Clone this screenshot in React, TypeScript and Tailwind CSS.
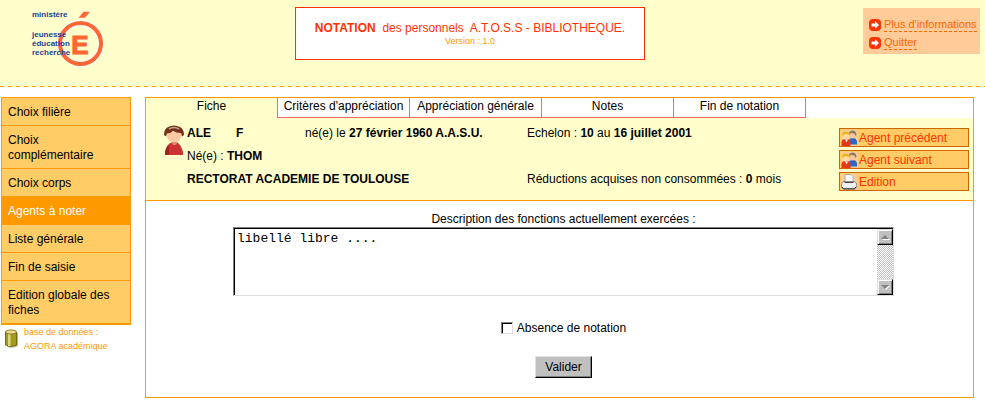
import React, { useState } from 'react';

interface MenuItem {
  label: string;
  active?: boolean;
}

const MENU: MenuItem[] = [
  { label: 'Choix filière' },
  { label: 'Choix complémentaire' },
  { label: 'Choix corps' },
  { label: 'Agents à noter', active: true },
  { label: 'Liste générale' },
  { label: 'Fin de saisie' },
  { label: 'Edition globale des fiches' },
];

const TABS = ['Fiche', "Critères d'appréciation", 'Appréciation générale', 'Notes', 'Fin de notation'];

const Logo: React.FC = () => (
  <div className="relative ml-8 mt-2 h-[60px] w-[74px]">
    <svg className="absolute inset-0" width="74" height="60" viewBox="0 0 74 60" aria-hidden="true">
      <circle cx="48.500" cy="35.500" r="20.500" fill="none" stroke="#fff" strokeWidth="6" />
      <circle cx="48.500" cy="35.500" r="20.500" fill="none" stroke="#ff6633" strokeWidth="4" />
      <path d="M46 10 L51.500 3.500 H58.500 L53 10 Z" fill="#ff6633" stroke="#fff" strokeWidth="0.500" />
      <text
        x="48"
        y="46"
        textAnchor="middle"
        fontFamily="Liberation Sans, sans-serif"
        fontWeight="bold"
        fontSize="26"
        fill="#ff6633"
        stroke="#ff6633"
        strokeWidth="1"
      >
        E
      </text>
    </svg>
    <div className="absolute left-0 top-0 text-[8px] font-bold leading-[9px] text-[#1c3f94]">
      <p className="pt-[2px]">ministère</p>
      <p className="mt-[11px]">jeunesse</p>
      <p>éducation</p>
      <p>recherche</p>
    </div>
  </div>
);

const ArrowIcon: React.FC = () => (
  <svg className="shrink-0" width="12" height="12" viewBox="0 0 12 12" aria-hidden="true">
    <rect width="12" height="12" rx="4" fill="#ff3300" />
    <path d="M2.500 4.500 H6 V2 L10 6 L6 10 V7.500 H2.500 Z" fill="#fff" />
  </svg>
);

const DatabaseIcon: React.FC = () => (
  <svg className="shrink-0" width="15" height="19" viewBox="0 0 15 19" aria-hidden="true">
    <path d="M3 4 H14 V17 Q9 20 3 18 Z" fill="#b4b4a8" />
    <path d="M1.500 3 V16 Q6.500 19 12.500 16 V3 Z" fill="#a39a24" stroke="#776b10" />
    <path d="M4 5 V17 H6.500 V5 Z" fill="#ddd67a" />
    <ellipse cx="7" cy="3" rx="5.500" ry="2" fill="#e8df90" stroke="#8a7d18" />
  </svg>
);

const PersonIcon: React.FC = () => (
  <svg className="shrink-0" width="20" height="30" viewBox="0 0 20 30" aria-hidden="true">
    <path d="M1 30 V27 Q3 18 8 17.500 H13 Q17 19 19 27 V30 Z" fill="#cc3333" />
    <path d="M1 30 V27 Q2 22 5 20 V30 Z" fill="#a51f22" />
    <path d="M7 17 H14 L11.500 20 H9 Z" fill="#d98a70" />
    <path d="M3 7 H17 V12 Q16 17 10 17 Q4 17 3 12 Z" fill="#ffc8a4" />
    <path d="M0 10 Q0 4 4 2 Q10 -1 16 2 Q20 4 20 10 L18 11.500 L17 8 Q12 8 9 6 Q7 8 3 8.500 L2 11.500 Z" fill="#7a3018" />
    <path d="M5 4 Q10 1 15 4" fill="none" stroke="#b8a898" strokeWidth="1.500" />
  </svg>
);

const PeopleIcon: React.FC = () => (
  <svg className="shrink-0" width="16" height="16" viewBox="0 0 16 16" aria-hidden="true">
    <rect width="16" height="16" fill="#ffcc99" />
    <path d="M8 14.500 V10 Q9 7.500 12 7.500 Q15 8 16 11 V14.500 Z" fill="#2c66c4" />
    <circle cx="11.500" cy="5" r="3.500" fill="#f5c49b" />
    <path d="M7.500 4 Q8 0.500 12 0.500 Q15.500 1 15.500 5 L14.500 6 Q14 3 11 3 Z" fill="#8a7a6a" />
    <path d="M0.500 16 V12 Q1 9 4 9 H6 Q9 9 9.500 12 V16 Z" fill="#e03818" />
    <circle cx="5" cy="6" r="3.500" fill="#ffd9a8" />
    <path d="M1 6 Q0.500 1.500 5 1.500 Q9 1.500 9 6 Q7 4 4.500 4 Q2 5 1 6 Z" fill="#eeb41c" />
    <path d="M4 9.500 L5.500 12.500 L7 9.500 Z" fill="#fff" />
  </svg>
);

const PrinterIcon: React.FC = () => (
  <svg className="shrink-0" width="16" height="16" viewBox="0 0 16 16" aria-hidden="true">
    <rect width="16" height="16" fill="#ffcc99" />
    <path d="M4 8 V0.500 H10 L12 2.500 V8 Z" fill="#fff" stroke="#8890a0" strokeWidth="0.700" />
    <path d="M2 7.500 H14 L15.600 10 V13 L14 15 H2 L0.400 13 V10 Z" fill="#f0f0f0" stroke="#777" strokeWidth="0.800" />
    <path d="M3.500 8.500 H12.500" stroke="#444" />
    <path d="M1 13 L2.500 14.800 H13.500 L15 13" fill="none" stroke="#333" />
  </svg>
);

const ACTIONS = [
  { label: 'Agent précédent', icon: <PeopleIcon /> },
  { label: 'Agent suivant', icon: <PeopleIcon /> },
  { label: 'Edition', icon: <PrinterIcon /> },
];

const Header: React.FC = () => (
  <header>
    <div className="grid h-[86px] grid-cols-[295px_350px_1fr] items-start bg-[#ffffcc]">
      <Logo />
      <div className="mt-[7px] h-[53px] border border-[#ff3300] bg-white pt-3 text-center text-[#ff3300]">
        <h1 className="whitespace-pre text-[12px] leading-4">
          <b>NOTATION</b>{'  des personnels  A.T.O.S.S - BIBLIOTHEQUE.'}
        </h1>
        <p className="text-[9px] leading-[10px] text-[#ff9900]">Version : 1.0</p>
      </div>
      <nav className="mr-[5px] mt-2 flex h-[46px] w-[117px] flex-col gap-1 justify-self-end bg-[#ffcc99] pl-[6px] pt-[10px] text-[11px] leading-[13px] text-[#ff6600]">
        {["Plus d'informations", 'Quitter'].map((label) => (
          <div key={label} className="flex items-center gap-[3px]">
            <ArrowIcon />
            <a href="#" className="whitespace-nowrap border-b border-dashed border-[#ff6600]">{label}</a>
          </div>
        ))}
      </nav>
    </div>
    <div className="h-px bg-[repeating-linear-gradient(90deg,#ff9900_0_4px,#ffffcc_4px_8px)]" />
  </header>
);

const Sidebar: React.FC = () => (
  <aside className="w-[130px] shrink-0">
    <nav className="border-x border-b-2 border-[#ff9900] bg-[#ffcc66]">
      {MENU.map((item) => (
        <a
          key={item.label}
          href="#"
          className={`block border-t border-[#ff9900] px-[6px] pb-[5px] pt-[7px] text-[12px] leading-[15px] ${
            item.active ? 'bg-[#ff9900] text-white' : 'text-black'
          }`}
        >
          {item.label}
        </a>
      ))}
    </nav>
    <div className="flex items-start gap-[5px] pl-[3px] text-[9px] leading-[14px] text-[#ff9900]">
      <div className="pt-1">
        <DatabaseIcon />
      </div>
      <p>
        base de données :<br />AGORA académique
      </p>
    </div>
  </aside>
);

const Tabs: React.FC = () => (
  <div className="flex h-5 text-[12px] leading-4" role="tablist">
    {TABS.map((tab, index) => (
      <button
        key={tab}
        type="button"
        role="tab"
        aria-selected={index === 0}
        className={`w-[132px] whitespace-nowrap border-r border-[#ff6666] pb-1 text-center ${
          index === 0 ? 'bg-[#ffffcc]' : 'border-b bg-white'
        }`}
      >
        {tab}
      </button>
    ))}
  </div>
);

const AgentCard: React.FC = () => (
  <section className="flex h-[83px] items-start border-b border-[#ff9900] bg-[#ffffcc] pl-[18px] pr-1 text-[12px]">
    <div className="mt-[7px]">
      <PersonIcon />
    </div>
    <div className="ml-[3px] mt-1 grid flex-1 grid-cols-[49px_69px_222px_1fr] whitespace-nowrap leading-[23px]">
      <b>ALE</b>
      <b>F</b>
      <p>né(e) le <b>27 février 1960 A.A.S.U.</b></p>
      <p>Echelon : <b>10</b> au <b>16 juillet 2001</b></p>
      <p className="col-span-4">Né(e) : <b>THOM</b></p>
      <b className="col-span-3">RECTORAT ACADEMIE DE TOULOUSE</b>
      <p>Réductions acquises non consommées : <b>0</b> mois</p>
    </div>
    <div className="mt-[10px] flex w-[130px] flex-col gap-[3px]">
      {ACTIONS.map((action) => (
        <button
          key={action.label}
          type="button"
          className="flex h-[19px] items-center gap-[2px] border border-[#cc6600] bg-[#ffcc66] pl-px text-[12px] text-[#ff3300]"
        >
          {action.icon}
          {action.label}
        </button>
      ))}
    </div>
  </section>
);

interface ScrollButtonProps {
  label: string;
  path: string;
}

const ScrollButton: React.FC<ScrollButtonProps> = ({ label, path }) => (
  <button
    type="button"
    aria-label={label}
    className="flex h-4 w-4 items-center justify-center border border-b-black border-l-[#dfdfdf] border-r-black border-t-[#dfdfdf] bg-[#c0c0c0] shadow-[inset_1px_1px_0_#fff,inset_-1px_-1px_0_#808080]"
  >
    <svg width="9" height="5" viewBox="0 0 9 5" aria-hidden="true">
      <path d={path} fill="#fff" transform="translate(1 1)" />
      <path d={path} fill="#808080" />
    </svg>
  </button>
);

const FicheForm: React.FC = () => {
  const [description, setDescription] = useState('libellé libre ....');
  const [absence, setAbsence] = useState(false);

  return (
    <form className="flex flex-col items-center pb-[19px] pl-2 pt-[10px] text-[12px] leading-4">
      <label htmlFor="description">Description des fonctions actuellement exercées :</label>
      <div className="flex h-[69px] w-full max-w-[661px] border border-b-[#dfdfdf] border-l-[#808080] border-r-[#dfdfdf] border-t-[#808080]">
        <div className="flex flex-1 border-l border-t border-black">
          <textarea
            id="description"
            value={description}
            onChange={(e) => setDescription(e.target.value)}
            className="flex-1 resize-none overflow-hidden bg-white px-[2px] py-[2px] font-['Liberation_Mono',monospace] text-[13px] leading-4 outline-none"
          />
          <div className="flex w-4 flex-col justify-between bg-[repeating-conic-gradient(#c0c0c0_0_25%,#ffffff_0_50%)] bg-[length:2px_2px]">
            <ScrollButton label="Défiler vers le haut" path="M0 4 L4 0 L8 4 Z" />
            <ScrollButton label="Défiler vers le bas" path="M0 0 H8 L4 4 Z" />
          </div>
        </div>
      </div>
      <label className="mt-6 flex items-center gap-1">
        <input
          type="checkbox"
          checked={absence}
          onChange={(e) => setAbsence(e.target.checked)}
          className="h-3 w-3 appearance-none border border-b-[#dfdfdf] border-l-[#808080] border-r-[#dfdfdf] border-t-[#808080] bg-white shadow-[inset_1px_1px_0_#000] checked:bg-black"
        />
        Absence de notation
      </label>
      <button
        type="button"
        className="mt-5 h-[22px] w-[57px] border border-b-black border-l-[#dfdfdf] border-r-black border-t-[#dfdfdf] bg-[#c0c0c0] shadow-[inset_-1px_-1px_0_#808080]"
      >
        Valider
      </button>
    </form>
  );
};

export default function App() {
  return (
    <div className="min-h-screen bg-white font-['Liberation_Sans',Arial,sans-serif] text-black">
      <Header />
      <div className="flex items-start pl-px pr-[11px] pt-[10px]">
        <Sidebar />
        <main className="ml-[14px] flex-1 border border-[#ff9900]">
          <Tabs />
          <AgentCard />
          <FicheForm />
        </main>
      </div>
    </div>
  );
}
